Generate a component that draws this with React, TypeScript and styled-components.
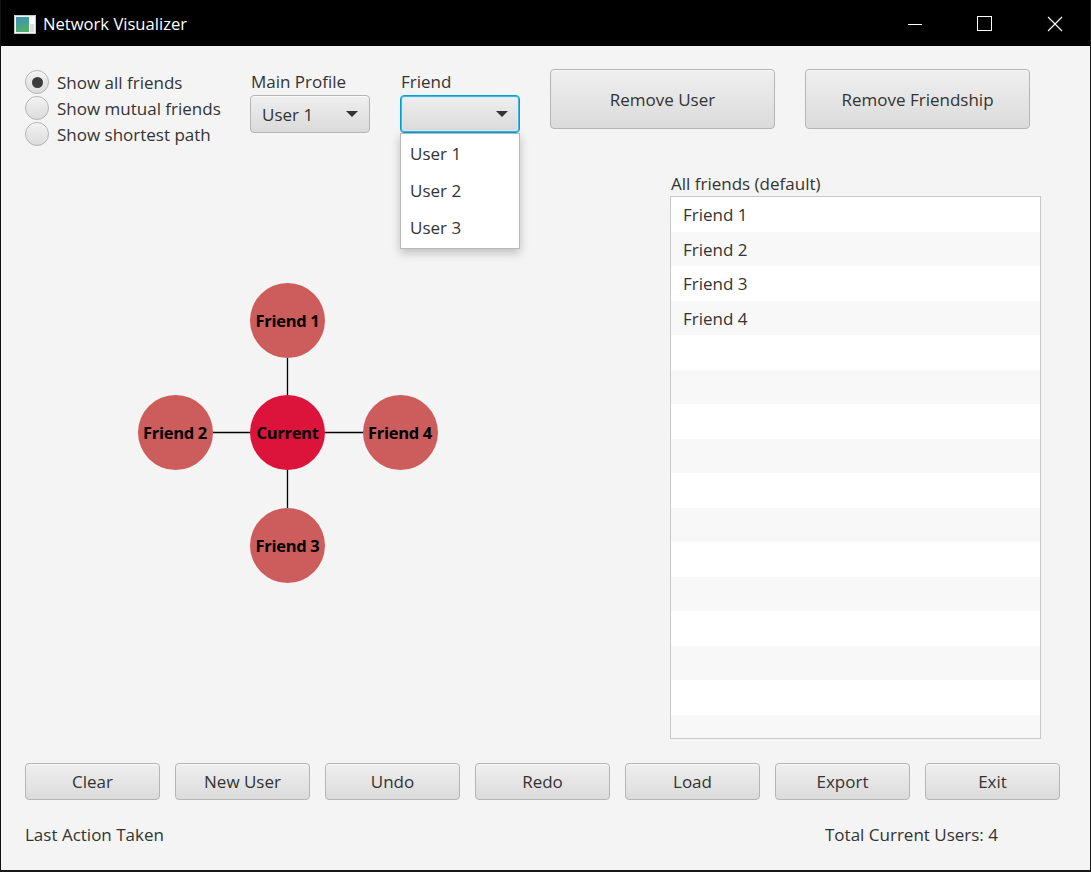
import React from 'react';
import styled, { createGlobalStyle } from 'styled-components';

const GlobalStyle = createGlobalStyle`
  html, body { margin: 0; padding: 0; background: #000; }
  body { font-family: "Open Sans", "Noto Sans", sans-serif; color: #333; }
  * { box-sizing: border-box; }
`;

const FS = '17px';

const Window = styled.div`
  width: 1091px;
  height: 872px;
  display: flex;
  flex-direction: column;
  background: #000;
  border-left: 1px solid #111;
  border-right: 1px solid #1a1a1a;
  border-bottom: 2px solid #1a1a1a;
  overflow: hidden;
`;

const TitleBar = styled.div`
  height: 46px;
  flex: none;
  display: flex;
  align-items: center;
  background: #000;
  padding: 2px 0 0 13px;
`;

const AppIcon = styled.svg`
  width: 22px;
  height: 19px;
  flex: none;
`;

const Title = styled.div`
  margin-left: 7px;
  color: #fff;
  font-size: 16.6px;
  line-height: 22px;
  flex: 1;
`;

const Caption = styled.div`
  display: flex;
  height: 100%;
`;

const CaptionButton = styled.div`
  width: 70px;
  height: 100%;
  display: flex;
  align-items: center;
  justify-content: center;
`;

const Content = styled.div`
  flex: 1;
  background: #f4f4f4;
  padding: 23px 0 0 24px;
  display: flex;
  flex-direction: column;
`;

const TopRow = styled.div`
  display: flex;
  align-items: flex-start;
  gap: 30px;
`;

const RadioGroup = styled.div`
  width: 195px;
  display: flex;
  flex-direction: column;
`;

const RadioItem = styled.label`
  height: 26px;
  display: flex;
  align-items: center;
  gap: 8px;
  font-size: ${FS};
  white-space: nowrap;
`;

const RadioCircle = styled.span<{ $checked?: boolean }>`
  width: 24px;
  height: 24px;
  flex: none;
  border-radius: 50%;
  border: 1px solid #b3b3b3;
  background: linear-gradient(to bottom, #f2f2f2, #dcdcdc);
  box-shadow: inset 0 1px 0 #fbfbfb;
  display: flex;
  align-items: center;
  justify-content: center;
  &::after {
    content: '';
    width: 11px;
    height: 11px;
    border-radius: 50%;
    background: ${p => (p.$checked ? '#3b3b3b' : 'transparent')};
  }
`;

const Field = styled.div`
  width: 120px;
  display: flex;
  flex-direction: column;
`;

const FieldLabel = styled.div`
  font-size: ${FS};
  line-height: 26px;
  padding-left: 1px;
`;

const ComboWrap = styled.div`
  position: relative;
`;

const Combo = styled.div<{ $focused?: boolean }>`
  height: 38px;
  display: flex;
  align-items: center;
  justify-content: space-between;
  padding: 0 11px 0 11px;
  border-radius: 4px;
  border: 1px solid ${p => (p.$focused ? '#039ed3' : '#b5b5b5')};
  box-shadow: ${p =>
    p.$focused ? 'inset 0 0 0 1px #3fb4e0, inset 0 0 0 2px #d8eef7' : 'inset 0 1px 0 #fafafa'};
  background: linear-gradient(to bottom, #efefef, #dadada);
  font-size: ${FS};
`;

const Arrow = styled.span`
  width: 0;
  height: 0;
  border-left: 6px solid transparent;
  border-right: 6px solid transparent;
  border-top: 6px solid #333;
  margin-left: auto;
`;

const Popup = styled.div`
  position: absolute;
  top: 100%;
  left: 0;
  width: 100%;
  background: #fff;
  border: 1px solid #b8b8b8;
  padding: 1px 0 2px;
  box-shadow: 0 4px 9px rgba(0, 0, 0, 0.22);
  z-index: 5;
`;

const PopupItem = styled.div`
  height: 37px;
  line-height: 37px;
  padding-left: 9px;
  font-size: ${FS};
`;

const Button = styled.div<{ $w: number; $h: number }>`
  width: ${p => p.$w}px;
  height: ${p => p.$h}px;
  flex: none;
  display: flex;
  align-items: center;
  justify-content: center;
  border: 1px solid #b5b5b5;
  border-radius: 4px;
  background: linear-gradient(to bottom, #efefef, #dbdbdb);
  box-shadow: inset 0 1px 0 #fafafa;
  font-size: ${FS};
  color: #333;
`;

const Middle = styled.div`
  margin-top: 26px;
  display: flex;
`;

const Graph = styled.div`
  position: relative;
  width: 645px;
  height: 566px;
  flex: none;
`;

const Edges = styled.svg`
  position: absolute;
  inset: 0;
  width: 100%;
  height: 100%;
`;

const Node = styled.div<{ $current?: boolean }>`
  position: absolute;
  width: 75px;
  height: 75px;
  margin: -37.5px 0 0 -37.5px;
  border-radius: 50%;
  background: ${p => (p.$current ? '#dc143c' : '#cd5c5c')};
  display: flex;
  align-items: center;
  justify-content: center;
  font-weight: 700;
  font-size: 16.5px;
  letter-spacing: -0.3px;
  color: #000;
  white-space: nowrap;
`;

const ListColumn = styled.div`
  width: 371px;
  flex: none;
  display: flex;
  flex-direction: column;
`;

const ListLabel = styled.div`
  font-size: ${FS};
  line-height: 22px;
  padding-left: 1px;
  margin-bottom: 1px;
`;

const ListBox = styled.div`
  height: 543px;
  border: 1px solid #c8c8c8;
  background: #fff;
  overflow: hidden;
`;

const ListRow = styled.div<{ $alt?: boolean }>`
  height: 34.53px;
  line-height: 35px;
  padding-left: 12px;
  font-size: ${FS};
  background: ${p => (p.$alt ? '#f8f8f8' : '#fff')};
`;

const ButtonRow = styled.div`
  margin-top: 24px;
  display: flex;
  gap: 15px;
`;

const StatusRow = styled.div`
  margin-top: 24px;
  display: grid;
  grid-template-columns: 800px auto;
  font-size: ${FS};
  line-height: 22px;
`;

const nodes = [
  { label: 'Current', x: 262.5, y: 259.5, current: true },
  { label: 'Friend 1', x: 262.5, y: 147 },
  { label: 'Friend 2', x: 150, y: 259.5 },
  { label: 'Friend 3', x: 262.5, y: 372 },
  { label: 'Friend 4', x: 375, y: 259.5 },
];

const friends = ['Friend 1', 'Friend 2', 'Friend 3', 'Friend 4'];
const listRows = Array.from({ length: 16 }, (_, i) => friends[i] ?? '');
const bottomButtons = ['Clear', 'New User', 'Undo', 'Redo', 'Load', 'Export', 'Exit'];

export default function App() {
  const center = nodes[0];
  return (
    <>
      <GlobalStyle />
      <Window>
        <TitleBar>
          <AppIcon viewBox="0 0 22 19">
            <defs>
              <linearGradient id="ig" x1="0" y1="0" x2="0.4" y2="1">
                <stop offset="0" stopColor="#3c8fc0" />
                <stop offset="1" stopColor="#4fae6a" />
              </linearGradient>
            </defs>
            <rect x="0.5" y="0.5" width="21" height="18" fill="#f4f4f4" stroke="#c8c8c8" />
            <rect x="2" y="2" width="13" height="15" fill="url(#ig)" />
            <rect x="16" y="2" width="4" height="7" fill="#ffffff" />
            <rect x="16" y="9" width="4" height="8" fill="#dcdcdc" />
          </AppIcon>
          <Title>Network Visualizer</Title>
          <Caption>
            <CaptionButton>
              <svg width="16" height="16" viewBox="0 0 16 16">
                <line x1="1" y1="8.5" x2="15" y2="8.5" stroke="#fff" strokeWidth="1" />
              </svg>
            </CaptionButton>
            <CaptionButton>
              <svg width="16" height="16" viewBox="0 0 16 16">
                <rect x="0.5" y="0.5" width="14" height="14" fill="none" stroke="#fff" strokeWidth="1" />
              </svg>
            </CaptionButton>
            <CaptionButton>
              <svg width="16" height="16" viewBox="0 0 16 16">
                <path d="M1 1 L15 15 M15 1 L1 15" stroke="#fff" strokeWidth="1.1" />
              </svg>
            </CaptionButton>
          </Caption>
        </TitleBar>
        <Content>
          <TopRow>
            <RadioGroup>
              <RadioItem>
                <RadioCircle $checked />
                Show all friends
              </RadioItem>
              <RadioItem>
                <RadioCircle />
                Show mutual friends
              </RadioItem>
              <RadioItem>
                <RadioCircle />
                Show shortest path
              </RadioItem>
            </RadioGroup>
            <Field>
              <FieldLabel>Main Profile</FieldLabel>
              <ComboWrap>
                <Combo>
                  User 1
                  <Arrow />
                </Combo>
              </ComboWrap>
            </Field>
            <Field>
              <FieldLabel>Friend</FieldLabel>
              <ComboWrap>
                <Combo $focused>
                  <Arrow />
                </Combo>
                <Popup>
                  <PopupItem>User 1</PopupItem>
                  <PopupItem>User 2</PopupItem>
                  <PopupItem>User 3</PopupItem>
                </Popup>
              </ComboWrap>
            </Field>
            <Button $w={225} $h={60}>Remove User</Button>
            <Button $w={225} $h={60}>Remove Friendship</Button>
          </TopRow>
          <Middle>
            <Graph>
              <Edges>
                {nodes.slice(1).map(n => (
                  <line
                    key={n.label}
                    x1={center.x}
                    y1={center.y}
                    x2={n.x}
                    y2={n.y}
                    stroke="#000"
                    strokeWidth="1.3"
                  />
                ))}
              </Edges>
              {nodes.map(n => (
                <Node key={n.label} $current={n.current} style={{ left: n.x, top: n.y }}>
                  {n.label}
                </Node>
              ))}
            </Graph>
            <ListColumn>
              <ListLabel>All friends (default)</ListLabel>
              <ListBox>
                {listRows.map((r, i) => (
                  <ListRow key={i} $alt={i % 2 === 1}>
                    {r}
                  </ListRow>
                ))}
              </ListBox>
            </ListColumn>
          </Middle>
          <ButtonRow>
            {bottomButtons.map(b => (
              <Button key={b} $w={135} $h={37}>
                {b}
              </Button>
            ))}
          </ButtonRow>
          <StatusRow>
            <span>Last Action Taken</span>
            <span>Total Current Users: 4</span>
          </StatusRow>
        </Content>
      </Window>
    </>
  );
}
